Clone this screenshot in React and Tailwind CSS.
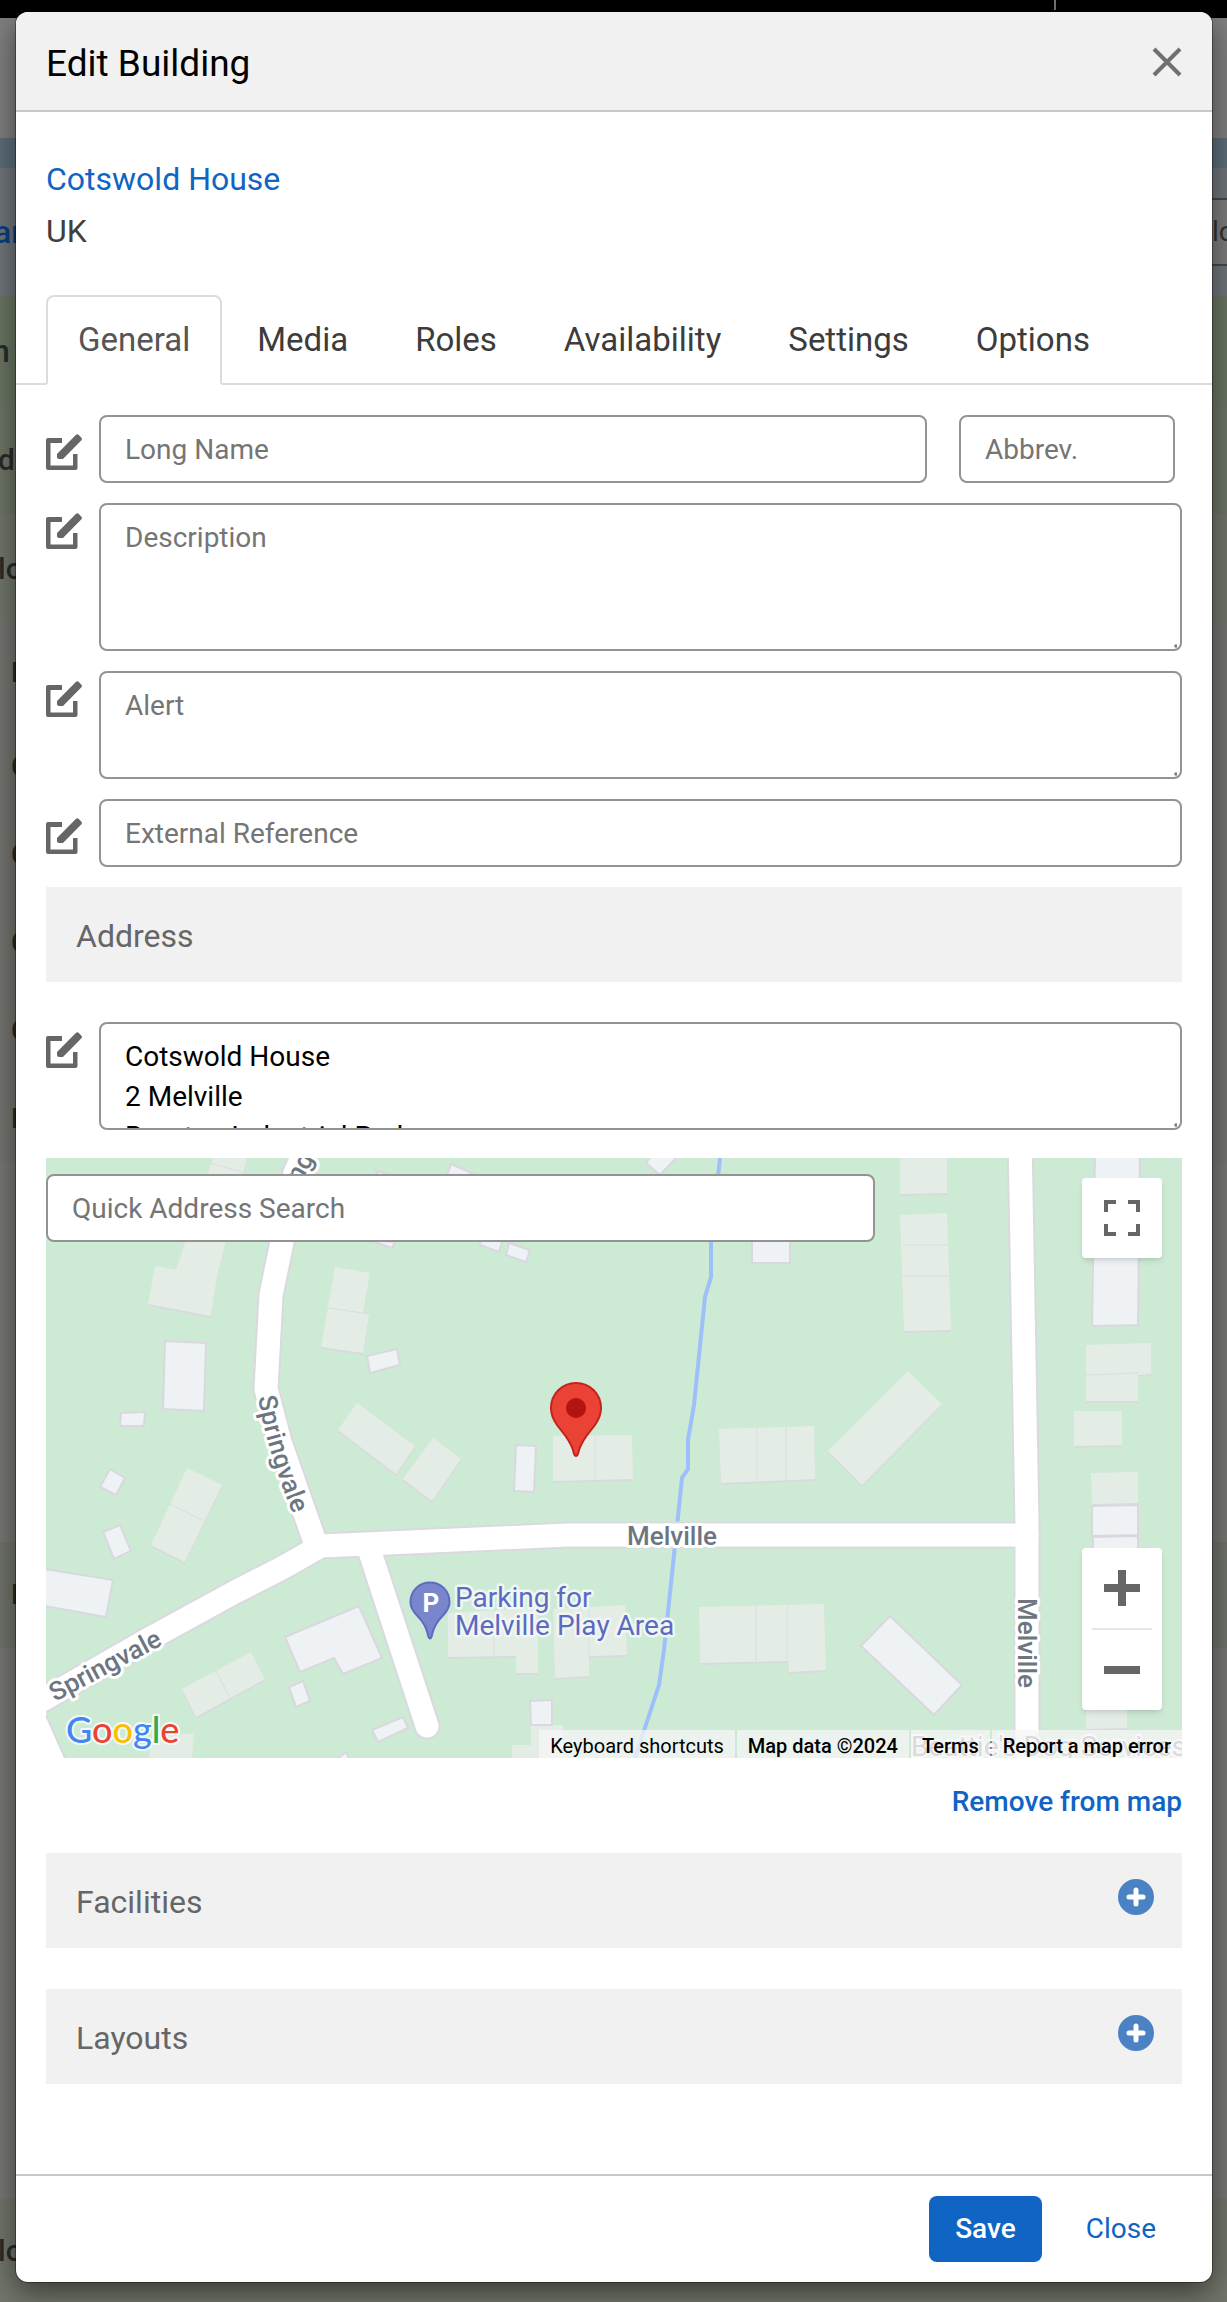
import React, { useState } from "react";

const TABS = ["General", "Media", "Roles", "Availability", "Settings", "Options"];

const PAGE_ROWS = [
  { className: "h-[120px] bg-[#7f7f7f]" },
  { className: "h-[30px] bg-[#5c6d79]" },
  { className: "h-[128px] bg-[#70757b] text-[#0b3f80] text-[32px]", text: "ar", filter: true },
  { className: "h-[109px] bg-[#697562] text-[32px]", text: "n" },
  { className: "h-[109px] bg-[#6c7565] text-[30px]", text: "d" },
  { className: "h-[109px] bg-[#71766c] text-[30px]", text: "lo" },
  { className: "h-[100px] bg-[#747570]", text: "D" },
  { className: "h-[88px] bg-[#747570]", text: "C" },
  { className: "h-[88px] bg-[#747570]", text: "C" },
  { className: "h-[88px] bg-[#747570]", text: "C" },
  { className: "h-[88px] bg-[#747570]", text: "C" },
  { className: "h-[88px] bg-[#747570]", text: "D" },
  { className: "h-[379px] bg-[#777874]" },
  { className: "h-[106px] bg-[#70736b]", text: "D" },
  { className: "h-[550px] bg-[#777874]" },
  { className: "h-[104px] bg-[#71756a] text-[30px]", text: "lo" },
];

const INDENT = {
  ar: "-ml-1.5",
  n: "-ml-2",
  d: "-ml-0.5",
  lo: "-ml-0.5",
  C: "ml-[11px]",
  D: "ml-[11px]",
};

// Built areas that share the plot colour
const HOUSES = [
  "167,0 201,0 171,119 130,112",
  "109,108 171,119 165,158 102,146",
  "141,310 176,327 139,404 105,387",
  "289,109 324,115 317,155 323,157 317,195 275,189",
  "311,245 369,288 350,316 292,272",
  "387,280 415,301 386,343 357,321",
  "507,278 586,277 587,321 507,323",
  "136,531 205,494 219,521 150,559",
  "402,455 492,450 492,515 470,515 470,498 402,499",
  "507,451 579,447 581,497 543,498 543,518 509,520",
  "485,567 517,567 517,600 466,600 466,587 485,587",
  "105,580 148,575 146,600 103,600",
  "854,0 901,0 901,35 854,36",
  "854,57 901,55 905,172 858,173",
  "862,213 896,246 816,327 782,293",
  "673,271 768,268 769,321 675,325",
  "653,449 778,446 780,512 743,514 742,503 654,505",
  "1040,187 1105,185 1105,216 1092,217 1092,243 1040,243",
  "1028,253 1076,253 1076,287 1028,288",
  "1045,315 1092,314 1092,345 1046,346",
  "1040,545 1081,545 1081,570 1040,571",
];

const SHEDS = [
  "119,183 160,185 158,253 117,251",
  "75,255 99,254 98,268 74,268",
  "64,311 79,320 70,337 54,329",
  "57,374 74,367 85,393 68,401",
  "-2,411 67,422 60,459 -2,448",
  "321,198 351,191 354,207 324,215",
  "470,287 490,288 488,334 468,333",
  "239,479 313,448 336,500 297,516 288,500 254,514",
  "243,529 257,523 264,543 250,549",
  "326,572 357,559 362,570 332,584",
  "484,543 506,542 506,567 485,567",
  "330,12 350,20 340,30",
  "323,82 349,84 346,90",
  "405,6 428,16 400,20",
  "434,80 457,80 453,94 434,87",
  "463,85 484,92 480,104 460,97",
  "290,602 300,594 304,602",
  "600,5 614,17 632,-2 605,-2",
  "706,80 744,80 744,105 706,105",
  "844,458 916,527 888,557 815,488",
  "1049,-2 1094,-2 1092,167 1046,168",
  "1046,348 1092,347 1092,377 1046,378",
  "1047,379 1092,378 1092,400 1047,400",
];

const PARTY_WALLS =
  "M165,5L199,15M124,346L158,363M282,150L317,155M549,278V322M170,513L184,540M448,452V498M543,449V498M856,87H902M856,118H903M711,270V323M740,269V322M710,448V504M741,447V503M1040,217L1092,215";

const ROADS = [
  "M262,-14L249,15L236,84L225,137L220,231L234,284L269,384",
  "M-20,551L0,540L103,481L189,434L236,410L275,388L522,377H981",
  "M324,394L381,568",
  "M974,-20L981,366V620",
];

function EditIcon() {
  return (
    <svg viewBox="0 0 36 36" className="size-9" fill="#666" aria-hidden="true">
      <path d="M2 4h14v5H4.500v22.500H27V20h4.500v14a2 2 0 0 1-2 2H2a2 2 0 0 1-2-2V6a2 2 0 0 1 2-2z" />
      <path d="M11 20L29.800.900q1.500-1.500 3 0l2.400 2.600q1.500 1.500 0 3L17 25H13q-2 0-2-2z" />
    </svg>
  );
}

function PlusCircle() {
  return (
    <svg viewBox="0 0 36 36" className="size-9" aria-hidden="true">
      <circle cx="18" cy="18" r="18" fill="#4a82c4" />
      <path d="M18 11v14M11 18h14" stroke="#fff" strokeWidth="5" strokeLinecap="round" />
    </svg>
  );
}

function FieldRow({ label, tall, children }) {
  return (
    <div className="flex items-start gap-[17px]">
      <button
        type="button"
        aria-label={`Edit ${label}`}
        className={tall ? "mt-[10px] shrink-0" : "mt-[19px] shrink-0"}
      >
        <EditIcon />
      </button>
      {children}
    </div>
  );
}

function TextInput({ label, className }) {
  return (
    <input
      type="text"
      aria-label={label}
      placeholder={label}
      className={`h-[68px] min-w-0 rounded-lg border-2 border-[#939393] bg-white px-6 text-[28px] text-black placeholder:text-[#757575] ${className}`}
    />
  );
}

function TextArea({ label, className, defaultValue }) {
  return (
    <div className="relative flex min-w-0 flex-1">
      <textarea
        aria-label={label}
        placeholder={label}
        defaultValue={defaultValue}
        className={`w-full resize-none overflow-hidden rounded-lg border-2 border-[#939393] bg-white px-6 pt-[13px] text-[28px] leading-10 text-black placeholder:text-[#757575] ${className}`}
      />
      <svg viewBox="0 0 6 6" className="absolute right-0.5 bottom-0.5 size-1.5" aria-hidden="true">
        <path d="M0 3h3M2 1v4" stroke="#555" />
      </svg>
    </div>
  );
}

function SectionBar({ title, expandable }) {
  return (
    <div className="flex h-[95px] items-start justify-between bg-[#f1f1f1] pt-[26px] pr-7 pl-[30px]">
      <h3 className="text-[32px] leading-[46px] text-[#666]">{title}</h3>
      {expandable && (
        <button type="button" aria-label={`Expand ${title}`}>
          <PlusCircle />
        </button>
      )}
    </div>
  );
}

function MapDrawing() {
  return (
    <svg
      viewBox="0 0 1136 600"
      preserveAspectRatio="xMidYMid slice"
      className="block h-full w-full font-[Roboto,sans-serif]"
      role="img"
      aria-label="Map"
    >
      <rect width="1136" height="600" fill="#cdead5" />
      <path d="M0,555L19,600H0z" fill="#fff" />
      <path d="M0,557L19,600" stroke="#d9d8de" strokeWidth="2" />
      <g fill="#d9dade" transform="translate(0 2)">
        {HOUSES.map((points) => (
          <polygon key={points} points={points} />
        ))}
      </g>
      <g fill="#e4ede5">
        {HOUSES.map((points) => (
          <polygon key={points} points={points} />
        ))}
      </g>
      <path d={PARTY_WALLS} stroke="#dadde0" fill="none" />
      <g fill="#eef2f4" stroke="#d9d8de" strokeWidth="2">
        {SHEDS.map((points) => (
          <polygon key={points} points={points} />
        ))}
      </g>
      <path
        d="M674,0L665,84V119L659,139L648,247L642,282V311L636,320L630,378L618,492L613,527L589,600"
        fill="none"
        stroke="#9dc0fb"
        strokeWidth="4"
      />
      <g fill="none" stroke="#dad9df" strokeWidth="27" strokeLinecap="round" strokeLinejoin="round">
        {ROADS.map((d) => (
          <path key={d} d={d} />
        ))}
      </g>
      <g fill="none" stroke="#fff" strokeWidth="23" strokeLinecap="round" strokeLinejoin="round">
        {ROADS.map((d) => (
          <path key={d} d={d} />
        ))}
      </g>

      <path id="springvale" d="M212,239Q223,303 252,367" fill="none" />
      <g
        fill="#6d7680"
        fontSize="26"
        fontWeight="500"
        stroke="#fff"
        strokeWidth="6"
        strokeLinejoin="round"
        paintOrder="stroke"
      >
        <text>
          <textPath href="#springvale">Springvale</textPath>
        </text>
        <text transform="translate(9 544) rotate(-28)">Springvale</text>
        <text transform="translate(254 26) rotate(-60)">ng</text>
        <text x="581" y="387">Melville</text>
        <text transform="translate(972 440) rotate(90)">Melville</text>
      </g>
      <text x="865" y="598" fontSize="28" fill="#80868f" stroke="#fff" strokeWidth="4" paintOrder="stroke">
        Beattie's Dog Services
      </text>

      <path
        d="M384 424.500c-11 0-19.500 8.500-19.500 19.500 0 6 3 10 7 14 5 5 8 9 10 17 .700 3 1 5.500 2.500 5.500s1.800-2.500 2.500-5.500c2-8 5-12 10-17 4-4 7-8 7-14 0-11-8.500-19.500-19.500-19.500z"
        fill="#7986cb"
        stroke="#5c6bc0"
        strokeWidth="2"
      />
      <text x="385" y="454" fontSize="26" fontWeight="700" fill="#fff" textAnchor="middle">
        P
      </text>
      <g fill="#5c6bc0" fontSize="28" stroke="#f0f7f2" strokeWidth="5" strokeLinejoin="round" paintOrder="stroke">
        <text x="409" y="449">Parking for</text>
        <text x="409" y="477">Melville Play Area</text>
      </g>

      <path
        d="M530 225c-14 0-25 11-25 25 0 7 2.500 12 6 17 5 7 12 13 16 25 1 4 1.500 6 3 6s2-2 3-6c4-12 11-18 16-25 3.500-5 6-10 6-17 0-14-11-25-25-25z"
        fill="#ea4335"
        stroke="#c5221f"
        strokeWidth="2"
      />
      <circle cx="530" cy="250" r="10" fill="#b31412" />
    </svg>
  );
}

function MapPanel() {
  return (
    <div className="relative h-[600px] overflow-hidden">
      <MapDrawing />
      <div className="absolute top-4 left-0 flex w-[73%]">
        <TextInput label="Quick Address Search" className="w-full" />
      </div>

      <button
        type="button"
        aria-label="Toggle fullscreen view"
        className="absolute top-5 right-5 flex size-20 items-center justify-center rounded bg-white shadow-md"
      >
        <svg viewBox="0 0 36 36" className="size-9" fill="none" stroke="#666" strokeWidth="4" aria-hidden="true">
          <path d="M2 12V2h10M24 2h10v10M34 24v10H24M12 34H2V24" />
        </svg>
      </button>

      <div className="absolute right-5 bottom-12 flex w-20 flex-col items-center rounded bg-white shadow-md">
        <button type="button" aria-label="Zoom in" className="flex size-20 items-center justify-center">
          <svg viewBox="0 0 36 36" className="size-9" stroke="#666" strokeWidth="8" aria-hidden="true">
            <path d="M18 0v36M0 18h36" />
          </svg>
        </button>
        <div className="h-0.5 w-[60px] bg-[#e6e6e6]" />
        <button type="button" aria-label="Zoom out" className="flex size-20 items-center justify-center">
          <svg viewBox="0 0 36 36" className="size-9" stroke="#666" strokeWidth="8" aria-hidden="true">
            <path d="M0 18h36" />
          </svg>
        </button>
      </div>

      <a href="#google" aria-label="Open this area in Google Maps" className="absolute bottom-0.5 left-4">
        <svg viewBox="0 0 126 44" className="h-11 w-[126px]">
          <text
            x="4"
            y="31"
            fontFamily="Lato, sans-serif"
            fontSize="36"
            fontWeight="500"
            stroke="#f3faf5"
            strokeWidth="4"
            strokeLinejoin="round"
            paintOrder="stroke"
          >
            <tspan fill="#4285f4">G</tspan>
            <tspan fill="#ea4335">o</tspan>
            <tspan fill="#fbbc04">o</tspan>
            <tspan fill="#4285f4">g</tspan>
            <tspan fill="#34a853">l</tspan>
            <tspan fill="#ea4335">e</tspan>
          </text>
        </svg>
      </a>

      <div className="absolute right-0 bottom-0 flex gap-0.5 text-[20px] leading-6 text-black">
        <button type="button" className="bg-[#f5f5f5]/75 px-[11px] pt-1">
          Keyboard shortcuts
        </button>
        <span className="bg-[#f5f5f5]/75 px-[11px] pt-1 font-medium">Map data ©2024</span>
        <a href="#terms" className="bg-[#f5f5f5]/75 px-[11px] pt-1 font-medium">
          Terms
        </a>
        <a href="#report" className="bg-[#f5f5f5]/75 px-[11px] pt-1 font-medium">
          Report a map error
        </a>
      </div>
    </div>
  );
}

function PageBehind() {
  return (
    <div
      className="col-start-1 row-start-1 flex flex-col overflow-hidden bg-[#777874] text-[28px] font-medium text-[#2a2b29]"
      aria-hidden="true"
    >
      <div className="flex h-[18px] shrink-0 justify-end bg-black pr-[171px]">
        <div className="h-2.5 w-0.5 bg-[#777]" />
      </div>
      {PAGE_ROWS.map((row, i) => (
        <div key={i} className={`flex shrink-0 items-center justify-between ${row.className}`}>
          <span className={INDENT[row.text]}>{row.text}</span>
          {row.filter && (
            <span className="flex h-[68px] w-[15px] items-center overflow-hidden border-y-2 border-[#484848] bg-[#7d7d7d] text-[28px] font-normal text-[#333]">
              lo
            </span>
          )}
        </div>
      ))}
    </div>
  );
}

export default function App() {
  const [tab, setTab] = useState("General");

  return (
    <div className="grid min-h-screen grid-cols-1 font-[Roboto,sans-serif]">
      <PageBehind />

      <div
        role="dialog"
        aria-labelledby="dialog-title"
        className="z-10 col-start-1 row-start-1 mt-3 mr-[15px] mb-5 ml-4 flex flex-col overflow-hidden rounded-xl bg-white shadow-[0_0_0_1px_rgba(0,0,0,0.35),0_10px_30px_rgba(0,0,0,0.5)]"
      >
        <header className="flex h-[100px] items-center justify-between border-b-2 border-[#c8c8c8] bg-[#f1f1f1] px-[30px] pt-0.5">
          <h1 id="dialog-title" className="pt-1 text-[37px] text-black">
            Edit Building
          </h1>
          <button type="button" aria-label="Close dialog">
            <svg viewBox="0 0 30 30" className="size-[30px]" stroke="#707070" strokeWidth="4" aria-hidden="true">
              <path d="M2 2l26 26M28 2L2 28" />
            </svg>
          </button>
        </header>

        <div className="px-[30px] pt-[41px] text-[32px] leading-[52px]">
          <a href="#building" className="block text-[#1064c4]">
            Cotswold House
          </a>
          <p className="text-[#404040]">UK</p>
        </div>

        <div role="tablist" className="mt-[38px] flex gap-[3px] border-b-2 border-[#dcdcdc] px-[30px]">
          {TABS.map((name) => (
            <button
              key={name}
              type="button"
              role="tab"
              aria-selected={tab === name}
              onClick={() => setTab(name)}
              className={`-mb-0.5 h-[90px] rounded-t-lg border-2 px-[30px] text-[33px] ${
                tab === name
                  ? "border-[#dcdcdc] border-b-white bg-white text-[#555]"
                  : "border-transparent text-[#3c3c3c]"
              }`}
            >
              {name}
            </button>
          ))}
        </div>

        <main className="flex flex-1 flex-col px-[30px] pt-[30px]">
          <div className="flex flex-col gap-5">
            <FieldRow label="Long Name">
              <TextInput label="Long Name" className="flex-1" />
              <TextInput label="Abbrev." className="mr-[7px] ml-[15px] w-[216px]" />
            </FieldRow>
            <FieldRow label="Description" tall>
              <TextArea label="Description" className="h-[148px]" />
            </FieldRow>
            <FieldRow label="Alert" tall>
              <TextArea label="Alert" className="h-[108px]" />
            </FieldRow>
            <FieldRow label="External Reference">
              <TextInput label="External Reference" className="flex-1" />
            </FieldRow>
            <SectionBar title="Address" />
          </div>

          <div className="mt-10 mb-7">
            <FieldRow label="Address" tall>
              <TextArea
                label="Address"
                className="h-[108px]"
                defaultValue={"Cotswold House\n2 Melville\nBourton Industrial Park"}
              />
            </FieldRow>
          </div>

          <MapPanel />

          <button
            type="button"
            className="mt-6 mb-[31px] self-end text-[28px] leading-10 font-medium text-[#1064c4]"
          >
            Remove from map
          </button>

          <div className="flex flex-col gap-[41px]">
            <SectionBar title="Facilities" expandable />
            <SectionBar title="Layouts" expandable />
          </div>
        </main>

        <footer className="mt-[89px] flex justify-end gap-[18px] border-t-2 border-[#c8c8c8] px-[30px] py-5 text-[28px]">
          <button type="button" className="h-[66px] rounded-lg bg-[#1064c4] px-[26px] font-medium text-white">
            Save
          </button>
          <button type="button" className="h-[66px] px-[26px] text-[#1064c4]">
            Close
          </button>
        </footer>
      </div>
    </div>
  );
}
